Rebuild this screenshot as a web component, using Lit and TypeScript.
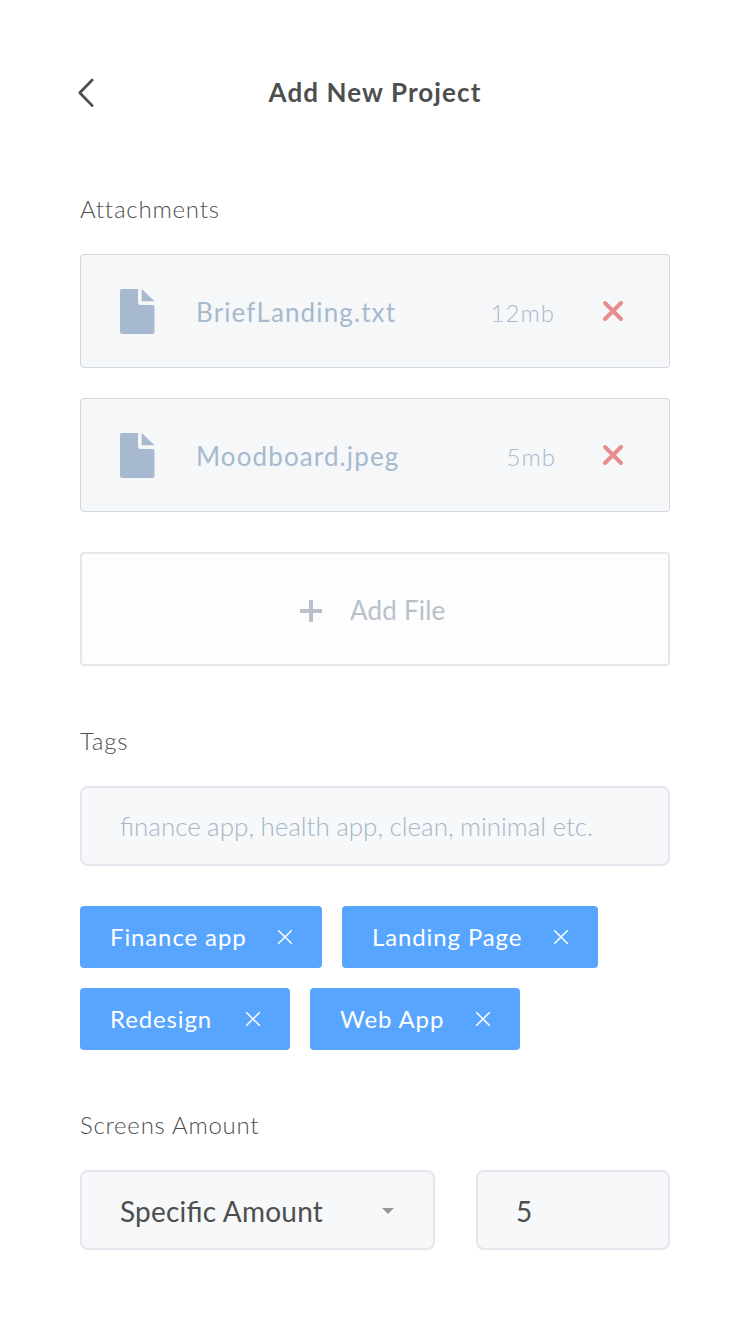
import { LitElement, html, css } from "lit";
import { customElement } from "lit/decorators.js";

interface Attachment {
  name: string;
  size: string;
}

interface Tag {
  label: string;
  width: number;
}

@customElement("app-root")
export class AppRoot extends LitElement {
  static styles = css`
    :host {
      display: block;
      box-sizing: border-box;
      width: 750px;
      height: 1334px;
      padding: 0 80px;
      background: #fff;
      color: #4d4f4e;
      font-family: Lato, "Liberation Sans", sans-serif;
      overflow: hidden;
    }
    * {
      box-sizing: border-box;
    }
    svg {
      display: block;
      flex: none;
    }
    header {
      display: grid;
      grid-template-columns: 40px 1fr 40px;
      align-items: center;
      height: 184px;
    }
    .back {
      margin: 1px 0 0 -4px;
    }
    h1 {
      margin: 0;
      text-align: center;
      font-size: 26px;
      line-height: 32px;
      font-weight: 700;
      letter-spacing: 1.1px;
      white-space: nowrap;
    }
    h2 {
      margin: 0;
      font-size: 24px;
      line-height: 30px;
      font-weight: 300;
      letter-spacing: 0.8px;
    }
    .attachments {
      padding-top: 10px;
    }
    .files {
      display: flex;
      flex-direction: column;
      gap: 30px;
      margin-top: 30px;
    }
    .file {
      display: flex;
      align-items: center;
      height: 114px;
      padding: 0 45px 0 39px;
      border: 1px solid #d2d8de;
      border-radius: 4px;
      background: #f5f7f9;
      color: #a7b9ce;
    }
    .name {
      flex: 1;
      margin-left: 41px;
      padding-top: 2px;
      font-size: 26px;
      line-height: 32px;
      letter-spacing: 1.12px;
    }
    .size {
      padding-top: 4px;
      margin-right: 47px;
      font-size: 24px;
      line-height: 30px;
      font-weight: 300;
      letter-spacing: 1px;
    }
    .file:last-child .size {
      margin-right: 46px;
    }
    .add {
      display: flex;
      align-items: center;
      height: 114px;
      margin-top: 40px;
      padding: 2px 0 0 218px;
      border: 2px solid #e4e8ed;
      border-radius: 4px;
      background: #fdfdfd;
      color: #b8c1ca;
      font-size: 26px;
      line-height: 32px;
      letter-spacing: 0.2px;
    }
    .add svg {
      margin-top: 2px;
    }
    .add span {
      margin-left: 28px;
    }
    .tags {
      padding-top: 60px;
    }
    .field {
      display: flex;
      align-items: center;
      height: 80px;
      border: 2px solid #e4e7ed;
      border-radius: 8px;
      background: #f6f8fa;
      padding: 0 38px;
      font-size: 28px;
      line-height: 34px;
    }
    .hint {
      margin-top: 30px;
      font-size: 26px;
      line-height: 32px;
      font-weight: 300;
      word-spacing: -0.7px;
      color: #a7b5c6;
      white-space: nowrap;
    }
    .chips {
      display: flex;
      flex-wrap: wrap;
      gap: 20px;
      margin-top: 40px;
    }
    .chip {
      display: flex;
      align-items: center;
      justify-content: space-between;
      height: 62px;
      padding: 0 29px 0 30px;
      border-radius: 4px;
      background: #57a5ff;
      color: #fff;
      font-size: 24px;
      line-height: 30px;
      letter-spacing: 0.88px;
      white-space: nowrap;
    }
    .screens {
      padding-top: 60px;
    }
    .screens h2 {
      letter-spacing: 0.75px;
    }
    .row {
      display: grid;
      grid-template-columns: 355px 194px;
      justify-content: space-between;
      margin-top: 30px;
    }
    .row .field {
      justify-content: space-between;
      padding-top: 2px;
      letter-spacing: 0.22px;
      font-feature-settings: "liga" 1;
    }
  `;

  private attachments: Attachment[] = [
    { name: "BriefLanding.txt", size: "12mb" },
    { name: "Moodboard.jpeg", size: "5mb" },
  ];

  private tags: Tag[] = [
    { label: "Finance app", width: 242 },
    { label: "Landing Page", width: 256 },
    { label: "Redesign", width: 210 },
    { label: "Web App", width: 210 },
  ];

  private renderFile(file: Attachment) {
    return html`<div class="file">
      <svg width="35" height="46" viewBox="0 0 35 46" fill="currentColor">
        <path d="M2 1H18V15a2 2 0 0 0 2 2H32.500a2 2 0 0 1 2 2V44a2 2 0 0 1-2 2H2a2 2 0 0 1-2-2V3a2 2 0 0 1 2-2Z" />
        <path d="M21.700 1 34.500 13.300H21.700Z" />
      </svg>
      <span class="name">${file.name}</span>
      <span class="size">${file.size}</span>
      <svg width="22" height="22" viewBox="0 0 22 22" fill="none" stroke="#e88d8d" stroke-width="4" stroke-linecap="round">
        <path d="M3 3 19 19M19 3 3 19" />
      </svg>
    </div>`;
  }

  private renderTag(tag: Tag) {
    return html`<div class="chip" style="width:${tag.width}px">
      <span>${tag.label}</span>
      <svg width="16" height="16" viewBox="0 0 16 16" fill="none" stroke="#fff" stroke-width="1.500">
        <path d="M1.200 1.200 14.800 14.800M14.800 1.200 1.200 14.800" />
      </svg>
    </div>`;
  }

  render() {
    return html`
      <header>
        <svg class="back" width="20" height="30" viewBox="0 0 20 30" fill="none" stroke="#4d4f4e" stroke-width="2.800" stroke-linecap="round" stroke-linejoin="round">
          <path d="M16.200 2 3.800 14.800 16.200 27.600" />
        </svg>
        <h1>Add New Project</h1>
      </header>
      <section class="attachments">
        <h2>Attachments</h2>
        <div class="files">${this.attachments.map((f) => this.renderFile(f))}</div>
        <div class="add">
          <svg width="22" height="22" viewBox="0 0 22 22" fill="currentColor">
            <path d="M9 0h4v9h9v4h-9v9H9v-9H0V9h9Z" />
          </svg>
          <span>Add File</span>
        </div>
      </section>
      <section class="tags">
        <h2>Tags</h2>
        <div class="field hint">finance app, health app, clean, minimal etc.</div>
        <div class="chips">${this.tags.map((t) => this.renderTag(t))}</div>
      </section>
      <section class="screens">
        <h2>Screens Amount</h2>
        <div class="row">
          <div class="field">
            <span>Specific Amount</span>
            <svg width="14" height="8" viewBox="0 0 14 8" fill="#959798">
              <path d="M1 1h12L7 7Z" />
            </svg>
          </div>
          <div class="field"><span>5</span></div>
        </div>
      </section>
    `;
  }
}
